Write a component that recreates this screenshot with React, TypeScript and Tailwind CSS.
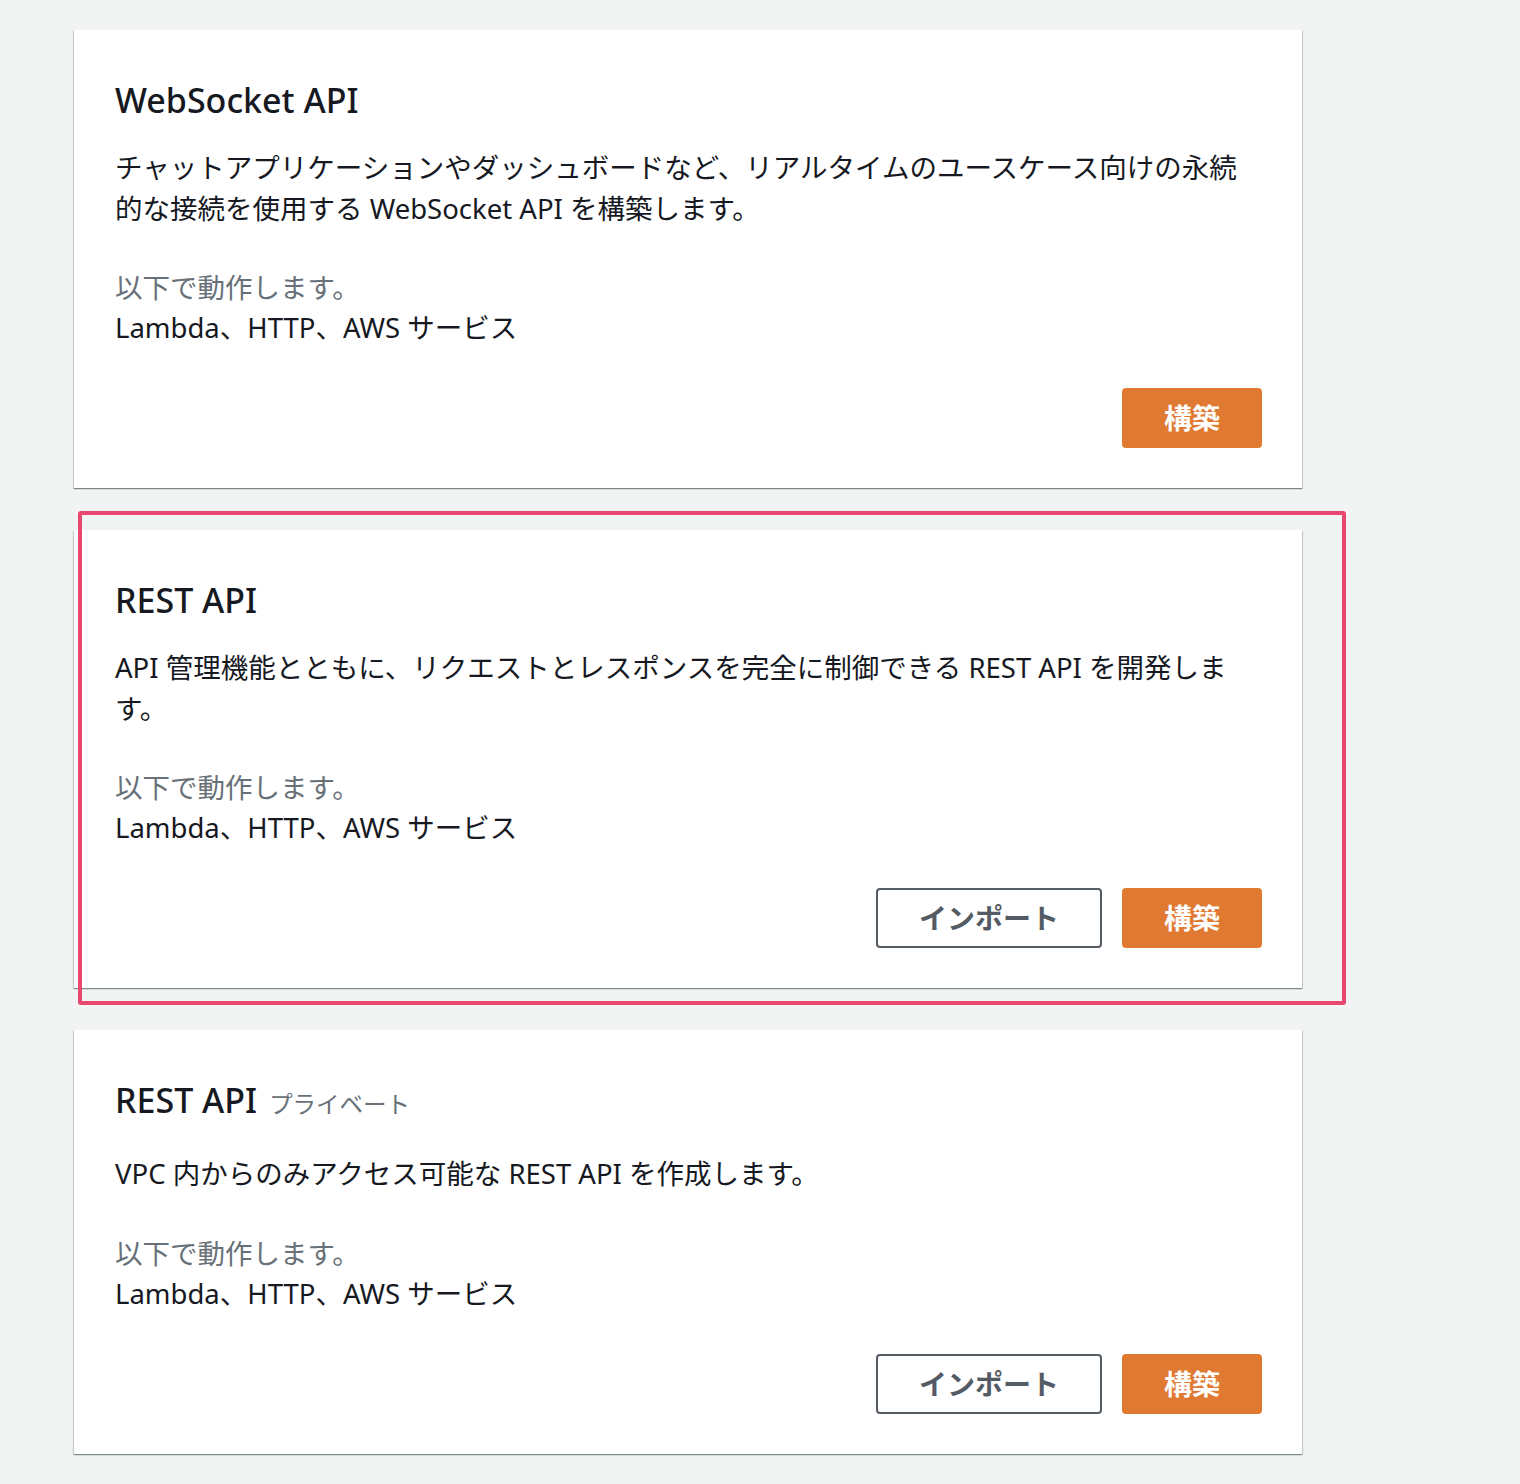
import React from "react";

const font = {
  fontFamily: '"Noto Sans", "Noto Sans CJK JP", sans-serif',
};

function Card({
  title,
  subtitle,
  lines,
  showImport,
  bodyTop,
  greyTop,
}: {
  title: string;
  subtitle?: string;
  lines: string[];
  showImport?: boolean;
  bodyTop: string;
  greyTop: string;
}) {
  return (
    <div className="w-[1228px] bg-white pt-[50px] pb-[40px] pl-[41px] pr-[40px] shadow-[0_1px_1px_0_rgba(0,28,36,0.3),1px_1px_1px_0_rgba(0,28,36,0.15),-1px_1px_1px_0_rgba(0,28,36,0.15)]">
      <div className="flex items-baseline h-[40px] leading-[40px]">
        <span className="text-[34px] font-medium text-[#16191f]">{title}</span>
        {subtitle && (
          <span className="ml-[12px] text-[23.5px] text-[#687078]">{subtitle}</span>
        )}
      </div>
      <div className={`${bodyTop} text-[27.5px] leading-[41px] text-[#16191f]`}>
        {lines.map((l, i) => (
          <div key={i} className="whitespace-nowrap">
            {l}
          </div>
        ))}
      </div>
      <div className={`${greyTop} text-[27.5px] leading-[40px]`}>
        <div className="text-[#687078]">以下で動作します。</div>
        <div className="text-[#16191f]">Lambda、HTTP、AWS サービス</div>
      </div>
      <div className="mt-[40px] flex justify-end gap-[20px]">
        {showImport && (
          <button className="w-[226px] h-[60px] rounded-[4px] border-2 border-[#545b64] bg-white text-[28px] leading-none font-bold text-[#545b64]">
            インポート
          </button>
        )}
        <button className="w-[140px] h-[60px] rounded-[4px] bg-[#e07a33] text-[28px] leading-none font-bold text-white">
          構築
        </button>
      </div>
    </div>
  );
}

export default function App() {
  return (
    <div
      style={font}
      className="relative min-h-[1484px] w-[1520px] bg-[#f2f3f3] pl-[74px] pt-[30px] pb-[30px]"
    >
      <div className="flex flex-col gap-[42px]">
        <Card
          title="WebSocket API"
          lines={[
            "チャットアプリケーションやダッシュボードなど、リアルタイムのユースケース向けの永続",
            "的な接続を使用する WebSocket API を構築します。",
          ]}
          bodyTop="mt-[27px]"
          greyTop="mt-[39px]"
        />
        <Card
          title="REST API"
          lines={[
            "API 管理機能とともに、リクエストとレスポンスを完全に制御できる REST API を開発しま",
            "す。",
          ]}
          showImport
          bodyTop="mt-[27px]"
          greyTop="mt-[39px]"
        />
        <Card
          title="REST API"
          subtitle="プライベート"
          lines={["VPC 内からのみアクセス可能な REST API を作成します。"]}
          showImport
          bodyTop="mt-[33px]"
          greyTop="mt-[40px]"
        />
      </div>
      <div className="pointer-events-none absolute left-[78px] top-[511px] w-[1268px] h-[494px] rounded-[3px] border-[4px] border-[#ea4770]" />
    </div>
  );
}
